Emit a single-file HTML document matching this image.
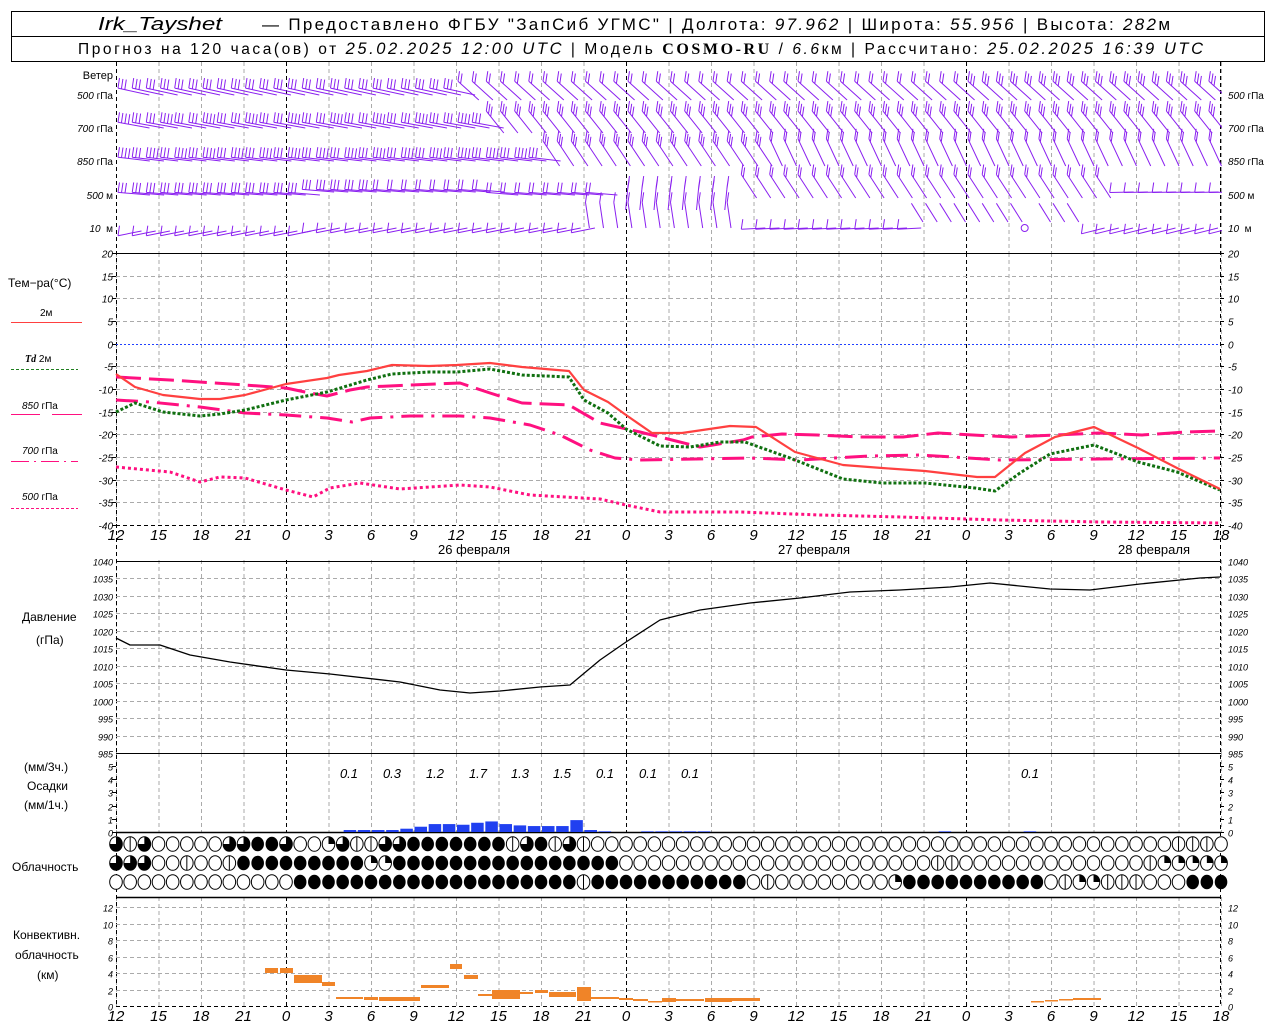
<!DOCTYPE html>
<html><head><meta charset="utf-8">
<style>
html,body{margin:0;padding:0;background:#fff;}
body{width:1280px;height:1024px;overflow:hidden;position:relative;font-family:"Liberation Sans",sans-serif;}
svg{position:absolute;left:0;top:0;}
text{font-family:"Liberation Sans",sans-serif;}
</style></head>
<body>
<svg id="s" width="1280" height="1024" viewBox="0 0 1280 1024" xmlns="http://www.w3.org/2000/svg">
<defs><clipPath id="wc"><rect x="116" y="62" width="1106" height="190"/></clipPath></defs>
<rect x="11.5" y="11.5" width="1253" height="50" fill="none" stroke="#000"/>
<line x1="11" y1="36.5" x2="1265" y2="36.5" stroke="#000"/>
<text x="98" y="30" font-size="18" font-family="Liberation Serif" font-style="italic" textLength="124" lengthAdjust="spacingAndGlyphs">Irk_Tayshet</text>
<text x="262" y="30" font-size="17" textLength="908" lengthAdjust="spacing">— Предоставлено ФГБУ "ЗапСиб УГМС" | Долгота: <tspan font-style="italic">97.962</tspan> | Широта: <tspan font-style="italic">55.956</tspan> | Высота: <tspan font-style="italic">282</tspan>м</text>
<text x="78" y="54" font-size="15.5" textLength="1125" lengthAdjust="spacing">Прогноз на 120 часа(ов) от <tspan font-style="italic" font-size="16.5">25.02.2025 12:00 UTC</tspan>  | Модель <tspan font-family="Liberation Serif" font-weight="bold" font-size="16">COSMO-RU</tspan> / <tspan font-style="italic">6.6</tspan>км | Рассчитано: <tspan font-style="italic" font-size="16.5">25.02.2025 16:39 UTC</tspan></text>
<g id="g"></g>
</svg>
<script>
(function(){
var G=document.getElementById('g');
var out=[];
function X(h){return 116+14.167*h;}
function add(s){out.push(s);}
function line(x1,y1,x2,y2,c,w,da){add('<line x1="'+x1+'" y1="'+y1+'" x2="'+x2+'" y2="'+y2+'" stroke="'+c+'" stroke-width="'+(w||1)+'"'+(da?' stroke-dasharray="'+da+'"':'')+'/>');}
function txt(x,y,s,fs,anc,cls,fill){add('<text x="'+x+'" y="'+y+'" font-size="'+fs+'"'+(anc?' text-anchor="'+anc+'"':'')+(cls?' font-style="italic"':'')+(fill?' fill="'+fill+'"':'')+'>'+s+'</text>');}
function poly(pts,c,w,da){var d=pts.map(function(p){return p[0]+','+p[1]}).join(' ');add('<polyline points="'+d+'" fill="none" stroke="'+c+'" stroke-width="'+w+'"'+(da?' stroke-dasharray="'+da+'"':'')+' stroke-linejoin="round"/>');}
var panels=[[62,253],[253,525],[560,753],[753,832],[897,1006]];
for(var h=0;h<=78;h+=3){var x=X(h)+0.5;var day=(h==12||h==36||h==60);
 panels.forEach(function(p){line(x,p[0],x,p[1],day?'#000':'#aaa',1,'4,3');});}
line(116.5,62,116.5,1006,'#000',1,'4,3');line(1220.5,62,1220.5,1006,'#000',1,'4,3');
for(var t=20;t>=-40;t-=5){var y=253+(20-t)*4.533;y=Math.round(y)+0.5;
 if(t==20)line(116,y,1221,y,'#000',1);else if(t==-40)line(116,y,1221,y,'#000',1,'4,3');else if(t==0)line(116,y,1221,y,'#2040ff',1,'2,2');else line(116,y,1221,y,'#aaa',1,'4,3');
 txt(113,y+4,t,10,'end',1);txt(1228,y+4,t,10,'',1);line(112,y,116,y,'#000');line(1220,y,1224,y,'#000');}
for(var p=1040;p>=985;p-=5){var y=Math.round(561+(1040-p)*3.49)+0.5;
 if(p==1040||p==985)line(116,y,1221,y,'#000',1);else line(116,y,1221,y,'#aaa',1,'4,3');
 txt(113,y+4,p,9,'end',1);txt(1228,y+4,p,9,'',1);}
for(var k=0;k<=5;k++){var y=832-k*13.2;y=Math.round(y)+0.5;txt(113,y+4,k,9,'end',1);txt(1228,y+4,k,9,'',1);line(112,y,116,y,'#000');line(1220,y,1224,y,'#000');}
line(116,832.5,1221,832.5,'#000',1.5);
for(var k=0;k<=12;k+=2){var y=Math.round(1006-k*8.25)+0.5;if(k>0)line(116,y,1221,y,'#aaa',1,'4,3');else line(116,y,1221,y,'#000',1,'4,3');
 txt(113,y+4,k,9,'end',1);txt(1228,y+4,k,9,'',1);}
line(116,897.5,1221,897.5,'#000',1.5);
for(var h=0;h<=78;h+=3){var lab=(12+h)%24;txt(X(h),540,lab,15,'middle',1);txt(X(h),1021,lab,15,'middle',1);}
txt(474,554,'26 февраля',13,'middle');txt(814,554,'27 февраля',13,'middle');txt(1154,554,'28 февраля',13,'middle');
txt(113,79,'Ветер',11,'end');
var wl=[['500',' гПа',95],['700',' гПа',128],['850',' гПа',161],['500',' м',195],['10',' &#160;м',228]];
wl.forEach(function(w){add('<text x="113" y="'+(w[2]+4)+'" font-size="10" text-anchor="end"><tspan font-style="italic">'+w[0]+'</tspan>'+w[1]+'</text>');
 add('<text x="1228" y="'+(w[2]+4)+'" font-size="10"><tspan font-style="italic">'+w[0]+'</tspan>'+w[1]+'</text>');});
txt(8,287,'Тем−ра(°C)',12);
txt(40,316,'2м',10);line(11,322.5,82,322.5,'#ff4040',1);
add('<text x="25" y="362" font-size="10"><tspan font-style="italic" font-weight="bold" font-family="Liberation Serif">Td</tspan>  2м</text>');line(11,369.5,78,369.5,'#208020',1,'3,2');
add('<text x="22" y="409" font-size="10"><tspan font-style="italic">850</tspan> гПа</text>');line(11,414.5,40,414.5,'#ff1080',1);line(52,414.5,82,414.5,'#ff1080',1);
add('<text x="22" y="454" font-size="10"><tspan font-style="italic">700</tspan> гПа</text>');line(11,461.5,78,461.5,'#ff1080',1,'18,5,2,5');
add('<text x="22" y="500" font-size="10"><tspan font-style="italic">500</tspan> гПа</text>');line(11,508.5,78,508.5,'#ff1080',1,'3,2');
txt(22,621,'Давление',12);txt(36,644,'(гПа)',12);
txt(24,771,'(мм/3ч.)',12);txt(27,790,'Осадки',12);txt(24,809,'(мм/1ч.)',12);
txt(12,871,'Облачность',12);
txt(13,939,'Конвективн.',12);txt(15,959,'облачность',12);txt(37,979,'(км)',12);
var red=[[116,374],[135,387],[163,395],[200,399],[220,399],[245,395],[286,384],[327,378],[339,375],[367,371],[392,365],[429,366],[457,365],[490,363],[522,367],[569,371],[584,390],[608,402],[626,415],[652,433],[682,433],[730,426],[756,427],[795,452],[843,465],[882,468],[925,471],[977,477],[995,477],[1025,453],[1055,437],[1094,427],[1138,448],[1177,468],[1220,489]];
var grn=[[116,412],[135,403],[163,412],[200,416],[220,414],[245,410],[286,400],[327,392],[367,380],[392,374],[429,372],[457,372],[490,369],[522,375],[569,377],[584,400],[608,413],[626,429],[660,446],[690,447],[720,442],[745,442],[790,458],[843,479],[882,483],[925,483],[975,488],[995,491],[1020,473],[1050,454],[1094,445],[1138,462],[1177,472],[1220,490]];
var p850=[[116,377],[170,380],[245,385],[286,388],[305,392],[327,396],[350,390],[367,387],[410,385],[460,383],[490,393],[522,403],[569,405],[600,423],[640,432],[700,447],[713,445],[743,440],[752,437],[782,434],[817,435],[860,437],[903,437],[938,433],[973,435],[1012,437],[1055,435],[1099,433],[1142,435],[1185,432],[1220,431]];
var p700=[[116,400],[150,402],[200,407],[245,413],[286,415],[327,418],[352,422],[370,418],[410,416],[460,416],[490,418],[530,425],[560,435],[590,450],[615,458],[640,460],[750,458],[800,460],[870,456],[920,455],[1000,460],[1100,459],[1220,458]];
var p500=[[116,467],[170,472],[200,482],[220,477],[245,478],[286,490],[313,497],[330,488],[360,483],[400,489],[460,485],[490,487],[530,495],[600,499],[626,505],[660,512],[740,512],[820,515],[900,517],[1000,520],[1100,522],[1220,523]];
poly(p500,'#ff1080',3,'3,3');
poly(p700,'#ff1080',3,'22,8,3,8');
poly(p850,'#ff1080',3,'25,8');
poly(grn,'#107010',3,'3,2');
poly(red,'#ff4040',2.2);
var pr=[[116,638],[130,645],[160,645],[190,655],[230,662],[286,670],[330,674],[400,682],[440,690],[470,693],[500,691],[540,687],[570,685],[600,660],[626,642],[660,620],[700,610],[750,603],[800,598],[850,592],[900,590],[950,587],[990,583],[1050,589],[1090,590],[1140,584],[1200,578],[1220,577]];
poly(pr,'#000',1.3);
var pv={16:.15,17:.15,18:.15,19:.15,20:.25,21:.4,22:.6,23:.6,24:.55,25:.7,26:.8,27:.6,28:.5,29:.45,30:.45,31:.45,32:.9,33:.15,34:.05,37:.05,38:.05,39:.05,40:.05,41:.05,58:.05,64:.05};
for(var k in pv){var x=X(+k),hgt=pv[k]*13.2;add('<rect x="'+(x+1)+'" y="'+(832-hgt)+'" width="12.5" height="'+hgt+'" fill="#2040f0"/>');}
[[349,'0.1'],[392,'0.3'],[435,'1.2'],[478,'1.7'],[520,'1.3'],[562,'1.5'],[605,'0.1'],[648,'0.1'],[690,'0.1'],[1030,'0.1']].forEach(function(a){txt(a[0],778,a[1],13,'middle',1);});
var cb=[[265,968,278,973],[280,968,293,973],[294,975,322,983],[322,982,335,986],[336,997,363,999],[364,997,378,1000],[379,997,420,1001],[421,985,449,988],[450,964,462,969],[464,975,478,979],[478,994,492,996],[492,990,520,999],[520,992,533,994],[535,990,548,993],[549,992,576,997],[577,987,591,1001],[591,997,619,999],[619,998,633,1000],[633,999,648,1001],[648,1001,662,1002],[662,998,676,1002],[676,999,704,1001],[705,998,732,1002],[732,998,760,1001],[1031,1001,1044,1002],[1045,1000,1058,1001],[1059,999,1073,1000],[1073,998,1101,1000]];
cb.forEach(function(b){add('<rect x="'+b[0]+'" y="'+b[1]+'" width="'+(b[2]-b[0])+'" height="'+Math.max(1.5,b[3]-b[1])+'" fill="#f08428"/>');});
var rows=[
 '3230000033443001322334444444234232000000000000000000000000000000000000000002220',
 '3330020024444444441144444444444444440000000000000000000000220000000000000211111',
 '0000000000000444444444444444444442444444444440200000000144444444440211222000444'];
var ry=[844,863,882];
rows.forEach(function(r,ri){for(var i=0;i<79;i++){var c=r[i]||'0',cx=X(i),cy=ry[ri],rx=6.3,ryy=7.3;
 if(c=='4'){add('<ellipse cx="'+cx+'" cy="'+cy+'" rx="'+rx+'" ry="'+ryy+'" fill="#000"/>');continue;}
 add('<ellipse cx="'+cx+'" cy="'+cy+'" rx="'+rx+'" ry="'+ryy+'" fill="#fff" stroke="#000" stroke-width="1"/>');
 if(c=='1')add('<path d="M'+cx+','+cy+' V'+(cy-ryy)+' A'+rx+','+ryy+' 0 0 1 '+(cx+rx)+','+cy+' Z" fill="#000"/>');
 if(c=='2')line(cx,cy-ryy,cx,cy+ryy,'#000',1);
 if(c=='3')add('<path d="M'+cx+','+cy+' V'+(cy-ryy)+' A'+rx+','+ryy+' 0 1 1 '+(cx-rx)+','+cy+' Z" fill="#000"/>');
}});
// wind barbs: tip placed at hourly x, station downwind
var WC='#8a20f0',wb=[];
function barb(x,y,dx,dy,n,len){var L=Math.sqrt(dx*dx+dy*dy);dx/=L;dy/=L;len=len||30;
 var tx=x,ty=y+dy*len,sx=x-dx*len,sy=y;
 var s='M'+sx.toFixed(1)+','+sy.toFixed(1)+' L'+tx.toFixed(1)+','+ty.toFixed(1);
 for(var j=0;j<n;j++){var bx=tx-dx*j*3.5,by=ty-dy*j*3.5;var ex=bx+1.5,ey=by-10;s+=' M'+bx.toFixed(1)+','+by.toFixed(1)+' L'+ex.toFixed(1)+','+ey.toFixed(1);}
 wb.push('<path d="'+s+'" fill="none" stroke="'+WC+'" stroke-width="1"/>');}
for(var i=0;i<=78;i++){var x=X(i)+2;
 if(i<24)barb(x,95,-1,-0.22,3,32);else if(i<60)barb(x,100,-0.75,-0.68,2,28);else barb(x,100,-0.75,-0.68,3,28);
 if(i<26)barb(x,128,-1,-0.18,i%3==0?4:3,32);else barb(x,133,-0.62,-0.78,3,28);
 if(i<30)barb(x,161,-1,-0.12,i%2?3:4,32);else if(i<46)barb(x,166,-0.55,-0.83,3,30);else barb(x,166,-0.42,-0.9,2,30);
 if(i<34)barb(x,195-(i>12&&i<26?3:0),-1,-0.08,i<18?3:2,32);else if(i==34||i==35){}else if(i<44)barb(x,210,0.1,-1,2,24);else if(i<70)barb(x,198,-0.55,-0.85,2,28);else barb(x,192,-1,0.02,1,24);
 if(i<33)barb(x,231-(i>12?3:0),-1,0.2,1,24);else if(i<44)barb(x,228,-0.15,-1,1,26);else if(i<56)barb(x,228,-1,0.05,1,24);else if(i<68){if(i==64)wb.push('<circle cx="'+x+'" cy="228" r="3.5" fill="none" stroke="'+WC+'"/>');else barb(x,222,-0.5,-0.8,0,22);}else barb(x,228,-1,0.25,1,24);
}
add('<g clip-path="url(#wc)">'+wb.join('')+'</g>');
G.innerHTML=out.join('');
})();
</script>
</body></html>
